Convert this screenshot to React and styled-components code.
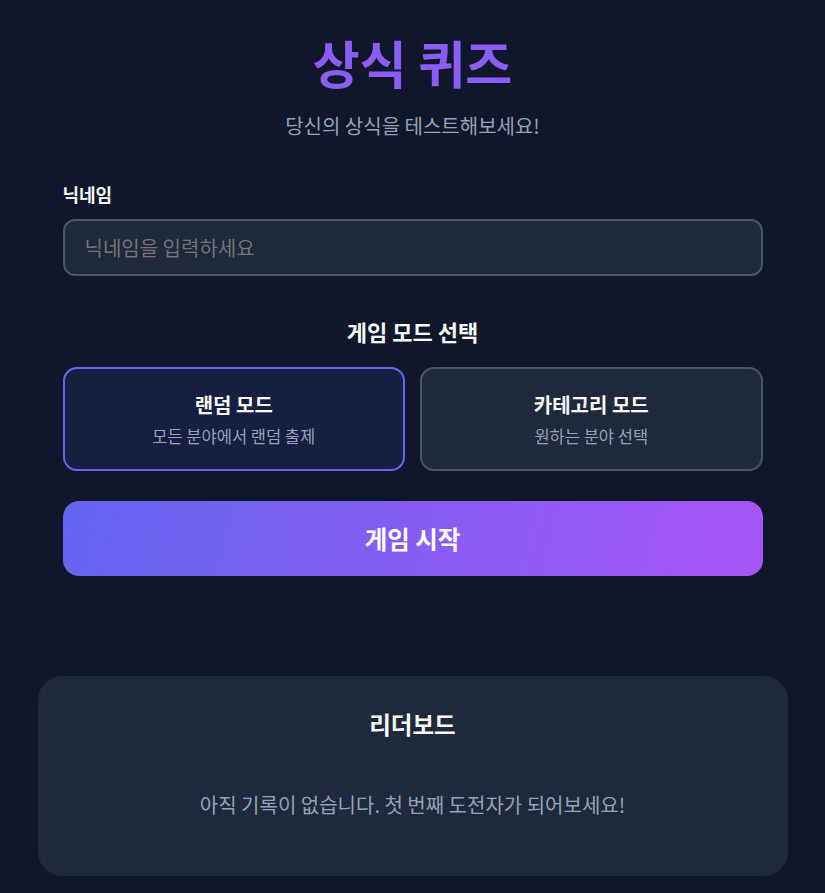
import { useState } from "react";
import styled, { createGlobalStyle } from "styled-components";

const GlobalStyle = createGlobalStyle`
  body {
    margin: 0;
    background: #0f172a;
    font-family: "Noto Sans CJK KR", "Noto Sans", sans-serif;
    color: #f1f5f9;
  }
  * { box-sizing: border-box; }
`;

const modes = [
  { id: "random", title: "랜덤 모드", desc: "모든 분야에서 랜덤 출제" },
  { id: "category", title: "카테고리 모드", desc: "원하는 분야 선택" },
];

export default function App() {
  const [mode, setMode] = useState("random");
  const [nickname, setNickname] = useState("");

  return (
    <Page>
      <GlobalStyle />
      <Main>
        <Title>상식 퀴즈</Title>
        <Subtitle>당신의 상식을 테스트해보세요!</Subtitle>

        <Field>
          <Label htmlFor="nickname">닉네임</Label>
          <Input
            id="nickname"
            value={nickname}
            onChange={(e) => setNickname(e.target.value)}
            placeholder="닉네임을 입력하세요"
          />
        </Field>

        <SectionTitle>게임 모드 선택</SectionTitle>
        <ModeGrid>
          {modes.map((m) => (
            <ModeCard key={m.id} $active={mode === m.id} onClick={() => setMode(m.id)}>
              <ModeTitle>{m.title}</ModeTitle>
              <ModeDesc>{m.desc}</ModeDesc>
            </ModeCard>
          ))}
        </ModeGrid>

        <StartButton>게임 시작</StartButton>
      </Main>

      <Leaderboard>
        <BoardTitle>리더보드</BoardTitle>
        <Empty>아직 기록이 없습니다. 첫 번째 도전자가 되어보세요!</Empty>
      </Leaderboard>
    </Page>
  );
}

const Page = styled.div`
  max-width: 750px;
  margin: 0 auto;
  padding-top: 27px;
  padding-bottom: 17px;
`;

const Main = styled.section`
  padding: 0 25px;
  display: flex;
  flex-direction: column;
`;

const Title = styled.h1`
  margin: 0;
  text-align: center;
  font-size: 51px;
  line-height: 70px;
  font-weight: 700;
  color: #8b5cf6;
`;

const Subtitle = styled.p`
  margin: 15px 0 0;
  text-align: center;
  font-size: 20px;
  line-height: 28px;
  color: #94a3b8;
`;

const Field = styled.div`
  margin-top: 41px;
  display: flex;
  flex-direction: column;
  gap: 12px;
`;

const Label = styled.label`
  font-size: 18px;
  line-height: 26px;
  font-weight: 700;
  color: #f8fafc;
`;

const Input = styled.input`
  height: 57px;
  padding: 0 20px;
  background: #1e293b;
  border: 2px solid #475569;
  border-radius: 12px;
  font-family: inherit;
  font-size: 20px;
  color: #f1f5f9;
  outline: none;
  ::placeholder {
    color: #6b7280;
  }
`;

const SectionTitle = styled.h2`
  margin: 40px 0 0;
  text-align: center;
  font-size: 22px;
  line-height: 30px;
  font-weight: 700;
  color: #f8fafc;
`;

const ModeGrid = styled.div`
  margin-top: 21px;
  display: grid;
  grid-template-columns: 1fr 1fr;
  gap: 15px;
`;

const ModeCard = styled.div`
  height: 104px;
  border-radius: 14px;
  border: 2px solid ${(p) => (p.$active ? "#6366f1" : "#475569")};
  background: ${(p) => (p.$active ? "#161e42" : "#1e293b")};
  display: flex;
  flex-direction: column;
  align-items: center;
  justify-content: center;
  gap: 6px;
  cursor: pointer;
`;

const ModeTitle = styled.div`
  font-size: 20px;
  line-height: 28px;
  font-weight: 700;
  color: #f8fafc;
`;

const ModeDesc = styled.div`
  font-size: 16.5px;
  line-height: 22px;
  color: #94a3b8;
`;

const StartButton = styled.button`
  margin-top: 30px;
  height: 75px;
  border: none;
  border-radius: 16px;
  background: linear-gradient(105deg, #6366f1 0%, #a855f7 100%);
  font-family: inherit;
  font-size: 24.5px;
  font-weight: 700;
  color: #ffffff;
  cursor: pointer;
`;

const Leaderboard = styled.section`
  margin-top: 100px;
  height: 200px;
  background: #1e293b;
  border-radius: 24px;
  padding: 30px;
  display: flex;
  flex-direction: column;
  align-items: center;
`;

const BoardTitle = styled.h3`
  margin: 0;
  font-size: 23.5px;
  line-height: 36px;
  font-weight: 700;
  color: #f8fafc;
`;

const Empty = styled.p`
  margin: 49px 0 0;
  font-size: 20px;
  line-height: 28px;
  color: #94a3b8;
`;
